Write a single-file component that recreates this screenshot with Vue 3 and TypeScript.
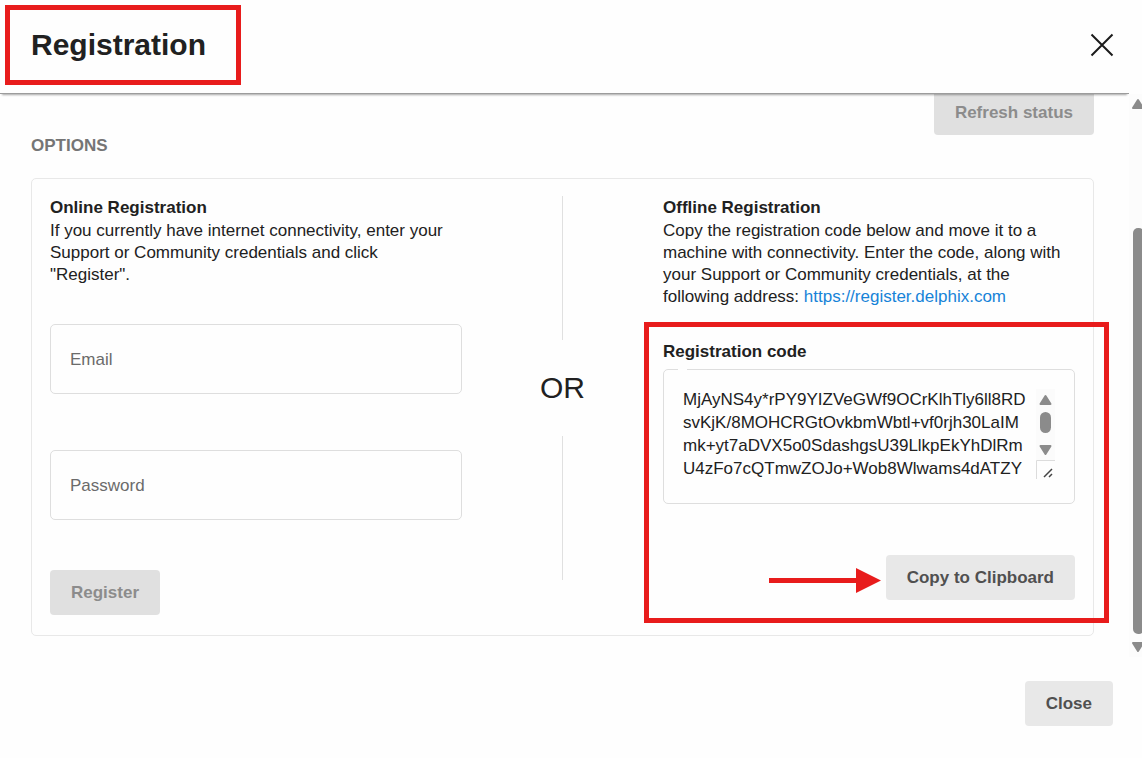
<script setup lang="ts">
import { ref } from 'vue'

const email = ref('')
const password = ref('')
const code = [
  'MjAyNS4y*rPY9YIZVeGWf9OCrKlhTly6ll8RD',
  'svKjK/8MOHCRGtOvkbmWbtl+vf0rjh30LaIM',
  'mk+yt7aDVX5o0SdashgsU39LlkpEkYhDlRm',
  'U4zFo7cQTmwZOJo+Wob8Wlwams4dATZY',
].join('\n')
</script>

<template>
  <div class="dialog" role="dialog" aria-labelledby="dialog-title">
    <header class="header">
      <h1 id="dialog-title" class="title">Registration</h1>
      <button class="icon-button" type="button" aria-label="Dismiss">
        <svg width="24" height="24" viewBox="0 0 24 24" fill="none" stroke="#1b1b1b" stroke-width="2">
          <path d="M1.500 1.500 22.500 22.500M22.500 1.500 1.500 22.500" />
        </svg>
      </button>
      <span class="mark mark-title"></span>
    </header>

    <div class="body">
      <main class="content">
        <div class="status-row">
          <button class="button" type="button" disabled>Refresh status</button>
        </div>
        <h2 class="section-title">OPTIONS</h2>

        <section class="panel">
          <form class="column" @submit.prevent>
            <h3 class="heading">Online Registration</h3>
            <p class="text">
              If you currently have internet connectivity, enter your Support or Community
              credentials and click "Register".
            </p>
            <input v-model="email" class="field" type="email" placeholder="Email" aria-label="Email" />
            <input v-model="password" class="field" type="password" placeholder="Password" aria-label="Password" />
            <button class="button register" type="submit" disabled>Register</button>
          </form>

          <div class="divider">
            <span class="rule"></span>
            <span class="or">OR</span>
            <span class="rule"></span>
          </div>

          <div class="column">
            <h3 class="heading">Offline Registration</h3>
            <p class="text">
              Copy the registration code below and move it to a machine with connectivity. Enter
              the code, along with your Support or Community credentials, at the following address:
              <a class="link" href="https://register.delphix.com">https://register.delphix.com</a>
            </p>
            <label class="heading code-label" for="code">Registration code</label>
            <div class="code-box">
              <textarea id="code" class="code" readonly :value="code"></textarea>
              <div class="code-scroll" aria-hidden="true">
                <svg width="19" height="71" viewBox="0 0 19 71" fill="#8b8b8b" stroke="#8b8b8b" stroke-linejoin="round">
                  <rect width="19" height="71" fill="#fbfbfb" stroke="none" />
                  <path d="M9.500 7 14.500 15H4.500Z" stroke-width="2" />
                  <rect x="4" y="23" width="11" height="21" rx="5.500" stroke="none" />
                  <path d="M9.500 65 14.500 57H4.500Z" stroke-width="2" />
                </svg>
                <svg width="19" height="19" viewBox="0 0 19 19" fill="none">
                  <path d="M.5 19V.5H19" stroke="#dcdcdc" />
                  <path d="M8 17 16 9M13 17 16 14" stroke="#444" stroke-width="1.500" />
                </svg>
              </div>
              <span class="notch"></span>
            </div>
            <div class="copy-row">
              <svg class="arrow" width="112" height="30" viewBox="0 0 112 30" fill="#e81c1c" aria-hidden="true">
                <path d="M0 15H87V5L112 17.500 87 30V20H0Z" />
              </svg>
              <button class="button" type="button">Copy to Clipboard</button>
            </div>
            <span class="mark mark-code"></span>
          </div>
        </section>
      </main>

      <div class="scrollbar" aria-hidden="true">
        <svg class="scroll-arrow" width="12" height="12" viewBox="0 0 12 12">
          <path d="M6 2 11 10H1Z" fill="#8b8b8b" stroke="#8b8b8b" stroke-width="2" stroke-linejoin="round" />
        </svg>
        <span class="thumb"></span>
        <svg class="scroll-arrow" width="12" height="12" viewBox="0 0 12 12">
          <path d="M6 10 11 2H1Z" fill="#8b8b8b" stroke="#8b8b8b" stroke-width="2" stroke-linejoin="round" />
        </svg>
      </div>
    </div>

    <footer class="footer">
      <button class="button" type="button">Close</button>
    </footer>
  </div>
</template>

<style>
body {
  margin: 0;
  background: #fefefe;
}
</style>

<style scoped>
.dialog,
.dialog * {
  box-sizing: border-box;
}
.dialog {
  display: flex;
  flex-direction: column;
  min-height: 100vh;
  overflow: hidden;
  color: #212121;
  font-family: 'Liberation Sans', Arial, sans-serif;
  font-size: 17px;
  line-height: 22px;
}
.header {
  position: relative;
  z-index: 1;
  display: flex;
  align-items: center;
  justify-content: space-between;
  min-height: 94px;
  margin-right: 13px;
  padding: 0 14px 3px 31px;
  border-bottom: 1px solid #9c9c9c;
  background: #fefefe;
  box-shadow: 0 3px 2px -2px rgba(0, 0, 0, 0.35);
}
.title {
  margin: 0;
  font-size: 30px;
  line-height: 36px;
}
.icon-button {
  display: flex;
  padding: 1px;
  border: 0;
  background: none;
}
.body {
  display: flex;
}
.content {
  flex: 1;
  min-width: 0;
  padding: 0 35px 21px 31px;
}
.status-row {
  display: flex;
  justify-content: flex-end;
  margin-top: -4px;
}
.section-title {
  margin: 0 0 21px;
  color: #757575;
  font-size: 17px;
  line-height: 22px;
}
.button {
  height: 45px;
  padding: 0 21px;
  border: 0;
  border-radius: 4px;
  background: #e8e8e8;
  color: #505050;
  font: bold 17px/22px 'Liberation Sans', Arial, sans-serif;
}
.button:disabled {
  background: #e0e0e0;
  color: #8c8c8c;
}
.panel {
  display: grid;
  grid-template-columns: minmax(0, 1fr) 201px minmax(0, 1fr);
  padding: 17px 18px 20px;
  border: 1px solid #e8e8e8;
  border-radius: 5px;
}
.column {
  position: relative;
  display: flex;
  flex-direction: column;
}
.heading {
  margin: 0;
  font-size: 17px;
  font-weight: bold;
  line-height: 23px;
}
.text {
  margin: 1px 0 0;
  padding-right: 8px;
}
.link {
  display: inline-block;
  color: #1683d8;
  text-decoration: none;
}
.field {
  width: 100%;
  height: 70px;
  margin-top: 56px;
  padding: 2px 19px 0;
  border: 1px solid #dedede;
  border-radius: 5px;
  background: transparent;
  color: inherit;
  font: inherit;
}
.text + .field {
  margin-top: 38px;
}
.field::placeholder {
  color: #6b6b6b;
  opacity: 1;
}
.register {
  align-self: flex-start;
  margin-top: 50px;
}
.divider {
  display: flex;
  flex-direction: column;
  align-items: center;
  padding-bottom: 35px;
}
.rule {
  flex: 1;
  width: 1px;
  background: #e0e0e0;
}
.or {
  padding: 30px 0;
  font-size: 30px;
  line-height: 36px;
}
.code-label {
  margin-top: 32px;
}
.code-box {
  position: relative;
  display: flex;
  height: 135px;
  margin-top: 6px;
  padding: 18px 19px 0;
  border: 1px solid #dedede;
  border-radius: 5px;
}
.notch {
  position: absolute;
  top: -1px;
  left: 14px;
  width: 9px;
  height: 1px;
  background: #fff;
}
.code {
  flex: 1;
  min-width: 0;
  height: 92px;
  padding: 0;
  border: 0;
  outline: 0;
  overflow: hidden;
  resize: none;
  background: transparent;
  color: inherit;
  font: inherit;
  line-height: 23px;
  white-space: pre;
}
.code-scroll {
  display: flex;
  flex-direction: column;
  padding-top: 1px;
}
.copy-row {
  display: flex;
  align-items: center;
  justify-content: flex-end;
  gap: 5px;
  margin-top: 51px;
}
.scrollbar {
  display: flex;
  flex-direction: column;
  width: 13px;
  padding: 4px 0 4px 3px;
  overflow: hidden;
  background: #fcfcfc;
}
.scroll-arrow {
  flex: none;
}
.thumb {
  flex: 1;
  width: 11px;
  margin: 118px 0 7px 1px;
  border-radius: 5px;
  background: #8b8b8b;
}
.footer {
  display: flex;
  justify-content: flex-end;
  padding: 24px 29px 32px;
}
.mark {
  position: absolute;
  border: 5px solid #e81c1c;
  pointer-events: none;
}
.mark-title {
  top: 5px;
  left: 5px;
  width: 236px;
  height: 80px;
}
.mark-code {
  top: 126px;
  right: -34px;
  bottom: -8px;
  left: -19px;
}
</style>
